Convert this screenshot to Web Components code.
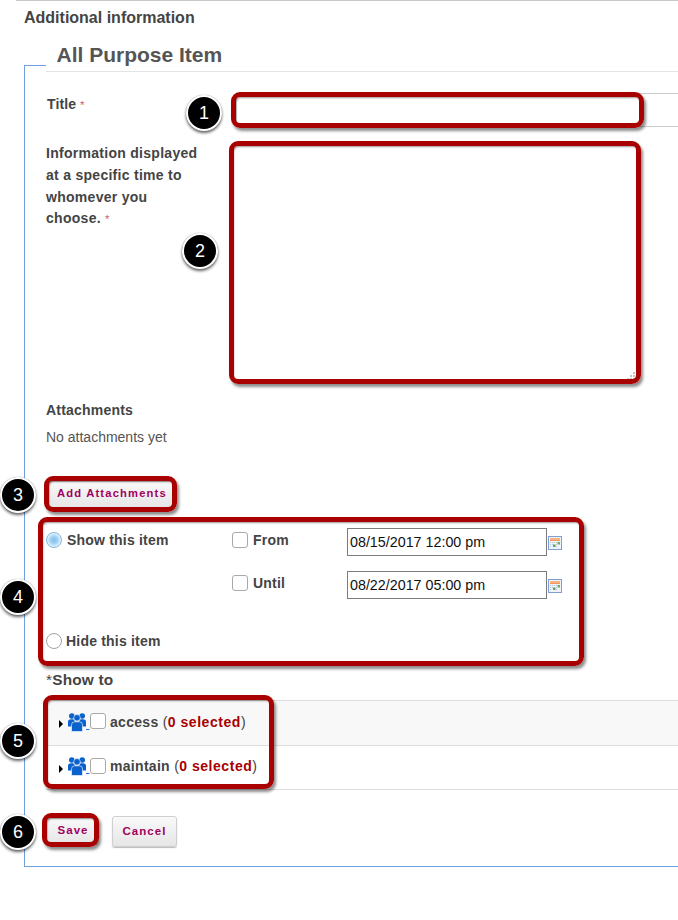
<!DOCTYPE html>
<html><head><meta charset="utf-8">
<style>
html,body{margin:0;padding:0;background:#fff}
body{font-family:"Liberation Sans",Arial,sans-serif;color:#444}
</style></head><body>
<sk-page></sk-page>
<script>
function def(name, css, html){
  customElements.define(name, class extends HTMLElement{
    constructor(){super();const s=this.attachShadow({mode:'open'});
      s.innerHTML='<style>'+css+'</style>'+html;}
    connectedCallback(){
      this.shadowRoot.querySelectorAll('[data-a]').forEach(e=>{e.textContent=this.getAttribute(e.dataset.a)||''});
    }
  });
}
const FONT='font-family:"Liberation Sans",Arial,sans-serif;';

def('sk-check',':host{display:inline-block;box-sizing:border-box;width:16px;height:16px;border:1px solid #a9a9a9;border-radius:3px;background:#fff;flex:none}','');
def('sk-radio',`:host{display:inline-block;box-sizing:border-box;width:16px;height:16px;border:1px solid #a3a3a3;border-radius:50%;background:#fff;flex:none}
:host([on]){border-color:#7db7e2;background:radial-gradient(circle,#7cc0ee 0,#9fd0f2 35%,#e8f4fc 70%,#fff 100%)}`,'');
def('sk-cal',':host{display:inline-block;width:14px;height:14px;flex:none}svg{display:block}',
`<svg width="14" height="14" viewBox="0 0 14 14"><rect x=".5" y=".5" width="13" height="13" fill="#eef3fa" stroke="#7f9fd4"/><rect x="2" y="2" width="10" height="1.5" fill="#fbb27a"/><rect x="2" y="3.5" width="10" height="1.5" fill="#f7955a"/><g fill="#b7c6de"><rect x="2" y="6" width="1" height="1"/><rect x="4" y="6" width="1" height="1"/><rect x="6" y="6" width="1" height="1"/><rect x="8" y="6" width="1" height="1"/><rect x="2" y="8" width="1" height="1"/><rect x="4" y="8" width="1" height="1"/><rect x="8" y="8" width="1" height="1"/><rect x="2" y="10" width="1" height="1"/><rect x="8" y="10" width="1" height="1"/></g><rect x="9.5" y="6" width="2.5" height="2.5" fill="#6fae62"/><rect x="5" y="8.5" width="2.5" height="2.5" fill="#5fa756"/></svg>`);
def('sk-date',`:host{display:flex;align-items:center;gap:1px;align-self:start}
.i{box-sizing:border-box;width:200px;height:28px;border:1px solid #7c7c7c;padding-left:2px;font:normal 14.3px/26px "Liberation Sans",Arial,sans-serif;letter-spacing:0;color:#111;background:#fff}
sk-cal{margin-top:1px}`,`<div class="i"><slot></slot></div><sk-cal></sk-cal>`);
def('sk-btn',`:host{display:inline-block;box-sizing:border-box;height:31px;padding:0 9.5px;border:1px solid #cfcfcf;border-radius:3px;background:linear-gradient(#f9f9f9,#e6e6e6);box-shadow:0 1px 1px #bbb;${FONT}font-weight:bold;font-size:11.5px;line-height:28px;letter-spacing:1.03px;color:#a1005e;white-space:nowrap}`,'<slot></slot>');
def('sk-mark',`:host{position:absolute;box-sizing:border-box;border:5px solid #a90000;border-radius:9px;box-shadow:2px 3px 3px rgba(0,0,0,.45),inset 1px 2px 2px -1px rgba(0,0,0,.4);pointer-events:none}`,'');
def('sk-num',`:host{position:absolute;box-sizing:border-box;width:36px;height:36px;border:2px solid #fff;border-radius:50%;background:#000;box-shadow:0 2px 3px rgba(0,0,0,.6),0 0 1px rgba(0,0,0,.4);color:#fff;${FONT}font-size:18px;line-height:32px;text-align:center}`,'<slot></slot>');
def('sk-star',`:host{color:#c66;font-weight:normal;font-size:11.5px;letter-spacing:0}`,'*');
def('sk-team',`:host{display:inline-block;width:22px;height:22px;flex:none}svg{display:block}`,
`<svg width="22" height="22" viewBox="0 0 22 22"><g fill="#0a62cc"><circle cx="3.800" cy="4" r="2.800"/><circle cx="14.200" cy="4" r="2.800"/><path d="M0 14.500V10q0-2.800 3-2.800h2.500l2 3v4.300z"/><path d="M18 14.500V10q0-2.800-3-2.800h-2.500l-2 3v4.300z"/><circle cx="9" cy="5.800" r="3.300" stroke="#fff" stroke-width=".6"/><path d="M3.500 19.500V13q0-3.200 3-3.200h5q3 0 3 3.200v6.500z" stroke="#fff" stroke-width=".6"/></g><rect x="18" y="17" width="3.500" height="1" fill="#2a78d8"/></svg>`);
def('sk-role',`:host{display:flex;align-items:center;box-sizing:border-box;height:45px;border-top:1px solid #ddd;padding:0 0 3px 13px;${FONT}font-size:14px;font-weight:bold;letter-spacing:.3px;color:#444}
:host([shade]){background:#f8f8f8}
:host([last]){height:44px}
i{display:block;width:0;height:0;border-left:4px solid #000;border-top:4px solid transparent;border-bottom:4px solid transparent;margin:5px 5px 0 0}
sk-team{margin-top:2px}sk-check{margin:-1px 4px 0 0}
b{color:#a90000;letter-spacing:.55px}span{font-weight:normal;color:#444}`,
`<i></i><sk-team></sk-team><sk-check></sk-check><div><slot></slot>&nbsp;<span>(</span><b>0 selected</b><span>)</span></div>`);
def('sk-panel',`:host{display:block;margin:0 0 0 24px}
.h{display:flex;height:31px}
.c{box-sizing:border-box;width:22px;height:8px;margin-top:24px;border:solid #6e9fe2;border-width:1px 0 0 1px}
.t{flex:1;box-sizing:border-box;border-bottom:1px solid #e3e3e3;padding:2px 0 0 10.500px;font-size:21px;line-height:24px;font-weight:bold;color:#555}
.b{box-sizing:border-box;height:795px;border:solid #6e9fe2;border-width:0 0 1px 1px;padding-left:21px}`,
`<div class="h"><div class="c"></div><div class="t" data-a="heading"></div></div><div class="b"><slot></slot></div>`);
def('sk-form',`:host{display:block;font-size:14px;font-weight:bold;letter-spacing:.28px;color:#444}
.titlerow{display:grid;grid-template-columns:190px 1fr;padding-top:21px}
.titlelbl{padding:3px 0 0 1px;line-height:16px;letter-spacing:.1px}
.in{height:34px;box-sizing:border-box;border:1px solid #ccc;border-right:0;background:#fff}
.inforow{display:grid;grid-template-columns:186px 404px;padding-top:15px;height:238px}
.il{line-height:21.8px;width:156px;padding-top:1px}
.ta{position:relative;height:234px;margin:4px 0 0 0;background:#fff}
.ta svg{position:absolute;right:0;bottom:-1px}
.att{margin-top:22px;line-height:16px;letter-spacing:.2px}
.none{margin-top:11px;font-weight:normal;letter-spacing:0;color:#555;line-height:16px}
.addb{margin-top:36px;display:flex}
.addb sk-btn{height:27px;line-height:23px;margin-left:3px;padding:0 7px;font-size:11.2px;letter-spacing:1.18px}
.vis{display:grid;grid-template-columns:186px 115px 1fr;grid-template-rows:43px 62px 16px;margin-top:20px;font-size:14px;letter-spacing:.2px}
.cellrow{display:flex;align-items:flex-start}
.lab{line-height:16px;padding-top:4px}
.cellrow sk-radio{margin:4px 5px 0 0}
.cellrow sk-check{margin:4px 5px 0 0}
.h4{margin-top:22px;font-size:15.4px;letter-spacing:.2px;line-height:18px}
.h4 s{text-decoration:none;font-weight:normal}
.roles{margin-top:11px;border-bottom:1px solid #ddd}
.btns{display:flex;gap:13px;margin-top:26px;align-items:flex-start}
.btns .save{margin-top:2px;height:26px;line-height:23px;padding:0 9.5px;margin-left:1px;border-color:#ddd}
`,
`<div class="titlerow"><div class="titlelbl">Title <sk-star></sk-star></div><div class="in"></div></div>
<div class="inforow"><div class="il">Information displayed at a specific time to whomever you choose. <sk-star></sk-star></div>
<div class="ta"><svg width="9" height="9" viewBox="0 0 9 9" fill="#c4c4c4"><rect x="6" y="0" width="2" height="2"/><rect x="3" y="3" width="2" height="2"/><rect x="6" y="3" width="2" height="2"/><rect x="0" y="6" width="2" height="2"/><rect x="3" y="6" width="2" height="2"/><rect x="6" y="6" width="2" height="2"/></svg></div></div>
<div class="att">Attachments</div>
<div class="none">No attachments yet</div>
<div class="addb"><sk-btn>Add Attachments</sk-btn></div>
<div class="vis">
  <div class="cellrow"><sk-radio on></sk-radio><span class="lab">Show this item</span></div>
  <div class="cellrow"><sk-check></sk-check><span class="lab">From</span></div>
  <sk-date>08/15/2017 12:00 pm</sk-date>
  <div></div>
  <div class="cellrow"><sk-check></sk-check><span class="lab">Until</span></div>
  <sk-date>08/22/2017 05:00 pm</sk-date>
  <div class="cellrow" style="margin-top:-4px"><sk-radio style="margin-right:4px"></sk-radio><span class="lab">Hide this item</span></div>
</div>
<div class="h4"><s>*</s>Show to</div>
<div class="roles"><sk-role shade>access</sk-role><sk-role last>maintain</sk-role></div>
<div class="btns"><sk-btn class="save">Save</sk-btn><sk-btn>Cancel</sk-btn></div>`);
def('sk-page',`:host{display:block;position:relative;width:678px;height:920px;overflow:hidden;${FONT}}
.rule{height:1px;background:#c8c8c8;margin-left:16px}
h3{margin:0 0 0 24px;padding-top:9px;font-size:16px;line-height:16px;height:15px;color:#444;font-weight:bold}
.gap{height:16px}`,
`<div class="rule"></div><h3>Additional information</h3><div class="gap"></div>
<sk-panel heading="All Purpose Item"><sk-form></sk-form></sk-panel>
<sk-mark style="left:231px;top:92px;width:413px;height:36px"></sk-mark>
<sk-mark style="left:229px;top:141px;width:412px;height:243px"></sk-mark>
<sk-mark style="left:44px;top:476px;width:133px;height:36px"></sk-mark>
<sk-mark style="left:38px;top:517px;width:546px;height:149px"></sk-mark>
<sk-mark style="left:43px;top:695px;width:231px;height:94px"></sk-mark>
<sk-mark style="left:42px;top:813px;width:57px;height:34px"></sk-mark>
<sk-num style="left:186px;top:95px">1</sk-num>
<sk-num style="left:182px;top:233px">2</sk-num>
<sk-num style="left:0;top:477px">3</sk-num>
<sk-num style="left:0;top:579px">4</sk-num>
<sk-num style="left:0;top:723px">5</sk-num>
<sk-num style="left:0;top:814px">6</sk-num>`);
</script>
</body></html>
